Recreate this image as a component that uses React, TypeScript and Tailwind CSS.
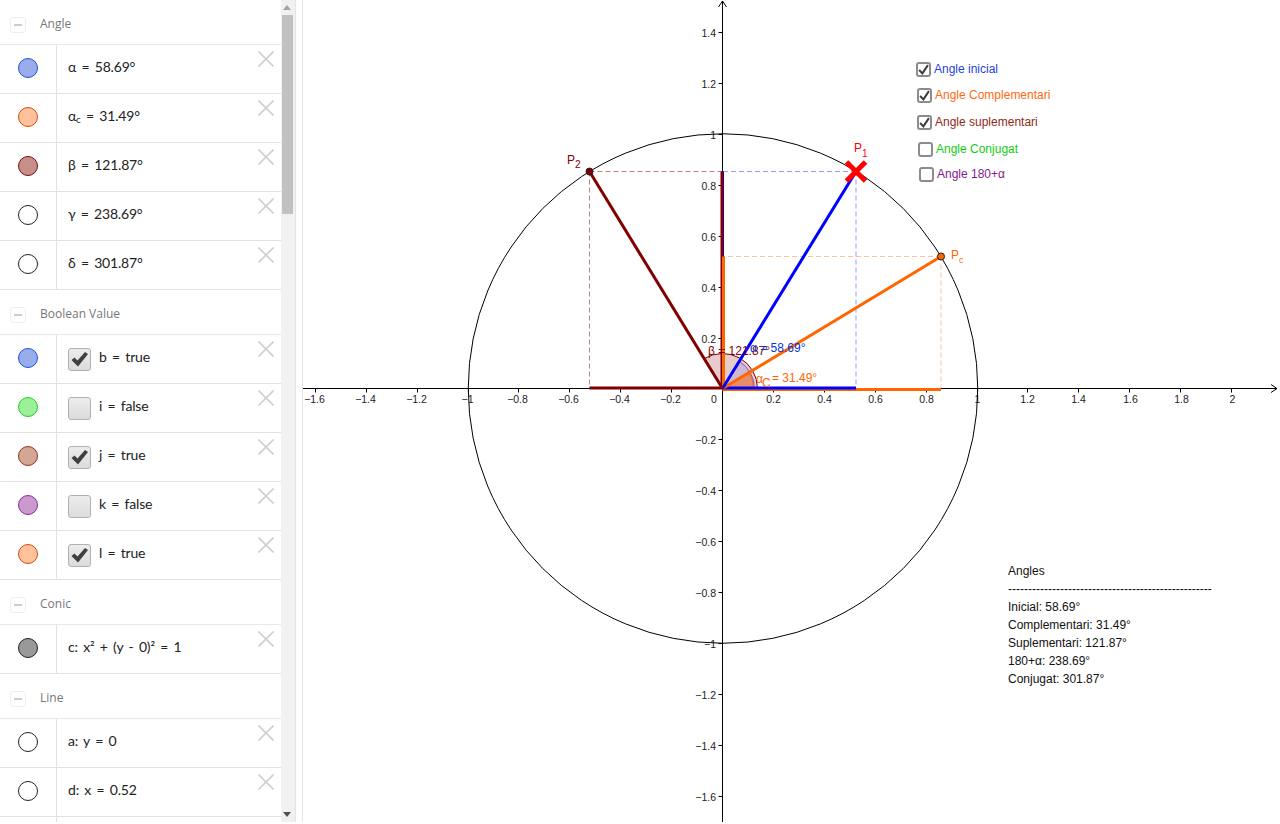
import React from "react";

const OX = 722.5;
const OY = 388.5;
const U = 254.5;

function Marble({ fill, border }: { fill: string; border: string }) {
  return (
    <span
      className="block w-5 h-5 rounded-full border mb-[3px]"
      style={{ backgroundColor: fill, borderColor: border }}
    />
  );
}

function CloseX() {
  return (
    <svg width="16" height="16" viewBox="0 0 16 16" className="absolute right-[7px] top-[6px]">
      <path d="M0.5 0.5 L15.5 15.5 M15.5 0.5 L0.5 15.5" stroke="#cfcfcf" strokeWidth="1.6" fill="none" />
    </svg>
  );
}

function Check({ on }: { on: boolean }) {
  return (
    <span className="relative flex items-center justify-center w-[23px] h-[23px] mr-2 rounded-[3px] border-[1.5px] border-[#b0b0b0] bg-gradient-to-b from-[#ececec] to-[#dcdcdc] shrink-0">
      {on && (
        <svg width="19" height="17" viewBox="0 0 19 17">
          <path d="M1.5 9 L4.5 6.5 L7.5 9.5 L15 1 L18 3 L8 15.5 Z" fill="#404040" />
        </svg>
      )}
    </span>
  );
}

type Row = { fill: string; border: string; text: React.ReactNode; check?: boolean };

function ItemRow({ fill, border, text, check }: Row) {
  return (
    <div className="relative flex h-[49px] border-b border-[#e1e1e1]">
      <div className="w-[57px] shrink-0 flex items-center justify-center border-r border-[#e1e1e1] pr-px">
        <Marble fill={fill} border={border} />
      </div>
      <div className="flex items-center pl-[11px] text-[14px] text-[#222] font-['Lato',sans-serif] tracking-[-0.2px] [word-spacing:2px]">
        {check !== undefined && <Check on={check} />}
        <span className="whitespace-pre mb-[6px]">{text}</span>
      </div>
      <CloseX />
    </div>
  );
}

function Group({ title, rows }: { title: string; rows: Row[] }) {
  return (
    <div>
      <div className="flex items-center h-[45px] pl-[10px] pt-px">
        <span className="flex items-center justify-center w-4 h-4 mt-1 rounded-[3px] border border-[#eeeeee]">
          <span className="block w-2 h-[2px] bg-[#cccccc]" />
        </span>
        <span className="ml-[14px] mt-[2px] text-[12px] text-[#777] font-['Open_Sans',sans-serif]">{title}</span>
      </div>
      <div className="border-t border-[#e8e8e8] -mt-px">
        {rows.map((r, i) => (
          <ItemRow key={i} {...r} />
        ))}
      </div>
    </div>
  );
}

const blue = { fill: "#99adec", border: "#1f4fe0" };
const orange = { fill: "#ffc29a", border: "#d9480f" };
const white = { fill: "#ffffff", border: "#222222" };

const groups: { title: string; rows: Row[] }[] = [
  {
    title: "Angle",
    rows: [
      { ...blue, text: "α = 58.69°" },
      { ...orange, text: <>α<sub className="text-[10px]">c</sub> = 31.49°</> },
      { fill: "#c68f8a", border: "#7a0c0c", text: "β = 121.87°" },
      { ...white, text: "γ = 238.69°" },
      { ...white, text: "δ = 301.87°" },
    ],
  },
  {
    title: "Boolean Value",
    rows: [
      { ...blue, text: "b = true", check: true },
      { fill: "#9df09a", border: "#1fd01f", text: "i = false", check: false },
      { fill: "#d2a796", border: "#96301c", text: "j = true", check: true },
      { fill: "#cc99cc", border: "#872e96", text: "k = false", check: false },
      { ...orange, text: "l = true", check: true },
    ],
  },
  { title: "Conic", rows: [{ fill: "#999999", border: "#222222", text: "c: x² + (y - 0)² = 1" }] },
  {
    title: "Line",
    rows: [
      { ...white, text: "a: y = 0" },
      { ...white, text: "d: x = 0.52" },
      { ...white, text: "" },
    ],
  },
];

const fmt = (v: number) => {
  const s = Math.abs(v).toFixed(1).replace(".0", "");
  return v < 0 ? "\u2212" + s : s;
};

const xTicks: number[] = [];
for (let i = -8; i <= 10; i++) if (i !== 0) xTicks.push(i / 5);
const yTicks: number[] = [];
for (let i = -8; i <= 7; i++) if (i !== 0) yTicks.push(i / 5);

function sector(r: number, deg: number) {
  const a = (deg * Math.PI) / 180;
  const x = OX + r * Math.cos(a);
  const y = OY - r * Math.sin(a);
  return `M${OX} ${OY} L${OX + r} ${OY} A${r} ${r} 0 0 0 ${x} ${y} Z`;
}

const P1 = { x: 856, y: 171.5 };
const P2 = { x: 589.5, y: 171.5 };
const Pc = { x: 941, y: 256.5 };

function Graph() {
  return (
    <svg
      className="absolute inset-0 w-full h-full font-['Liberation_Sans',sans-serif]"
      viewBox="303 0 977 822"
    >
      {/* dashed guides */}
      <g strokeDasharray="5 3" strokeWidth="1" fill="none">
        <path d={`M${P1.x} ${P1.y} H${OX} M${P1.x} ${P1.y} V${OY}`} stroke="#0000ff" strokeOpacity="0.4" />
        <path d={`M${P2.x} ${P2.y} H${OX} M${P2.x} ${P2.y} V${OY}`} stroke="#800000" strokeOpacity="0.5" />
        <path d={`M${Pc.x} ${Pc.y} H${OX} M${Pc.x} ${Pc.y} V${OY}`} stroke="#ff6600" strokeOpacity="0.4" />
      </g>

      {/* axes */}
      <path d={`M303 ${OY} H1277 M1271 ${OY - 4} L1277 ${OY} L1271 ${OY + 4}`} stroke="#000" fill="none" />
      <path d={`M${OX} 822 V1 M${OX - 4} 7 L${OX} 1 L${OX + 4} 7`} stroke="#000" fill="none" />
      {xTicks.map((t) => {
        const x = Math.round(OX + 0.5 + t * U) - 0.5;
        return (
          <g key={t}>
            <path d={`M${x} ${OY} v4`} stroke="#000" />
            <text x={x - (t < 0 ? 1 : 0) + (t > 1.5 ? 1 : 0)} y={403} textAnchor="middle" fontSize="10.5" fill="#222">
              {fmt(t)}
            </text>
          </g>
        );
      })}
      {yTicks.map((t) => {
        const y = Math.round(OY - t * U) + 0.5;
        return (
          <g key={t}>
            <path d={`M${OX - 4} ${y} h4`} stroke="#000" />
            <text x={716} y={y + 4.5} textAnchor="end" fontSize="10.5" fill="#222">
              {fmt(t)}
            </text>
          </g>
        );
      })}
      <text x={711} y={403} fontSize="10.5" fill="#222">0</text>

      {/* unit circle */}
      <circle cx={723} cy={OY} r={254.75} stroke="#000" strokeWidth="1" fill="none" />

      {/* angle sectors */}
      <path d={sector(35, 121.87)} fill="#800000" fillOpacity="0.2" stroke="#800000" strokeWidth="1" />
      <path d={sector(32, 58.69)} fill="#0000ff" fillOpacity="0.1" stroke="#0000ff" strokeOpacity="0.5" strokeWidth="1" />
      <path d={sector(31, 31.49)} fill="#ff6600" fillOpacity="0.5" stroke="#ff6600" strokeWidth="1" />

      {/* segments */}
      <g strokeWidth="3" fill="none">
        <path d={`M${OX} ${OY} L${OX} ${P1.y}`} stroke="#0000ff" />
        <path d={`M${OX - 0.5} ${OY} V${P2.y}`} stroke="#800000" />
        <path d={`M${OX + 1} ${OY} V${Pc.y}`} stroke="#ff6600" />
        <path d={`M${OX} ${OY + 1} H${Pc.x}`} stroke="#ff6600" />
        <path d={`M${OX} ${OY - 0.5} H${P1.x}`} stroke="#0000ff" />
        <path d={`M${P2.x} ${OY - 0.5} H${OX}`} stroke="#800000" />
        <path d={`M${OX} ${OY} L${Pc.x} ${Pc.y}`} stroke="#ff6600" />
        <path d={`M${OX} ${OY} L${P1.x} ${P1.y}`} stroke="#0000ff" />
        <path d={`M${OX} ${OY} L${P2.x} ${P2.y}`} stroke="#800000" />
      </g>

      {/* angle labels */}
      <text x={708} y={355} fontSize="12" fill="#800000">β = 121.87°</text>
      <text x={750} y={352} fontSize="12" fill="#0033dd">α = 58.69°</text>
      <text x={756} y={383} fontSize="12" fill="#ff6600">α</text>
      <text x={762} y={387} fontSize="12" fill="#ff6600">C</text>
      <text x={772} y={382} fontSize="12" fill="#ff6600">= 31.49°</text>

      {/* points */}
      <circle cx={P2.x} cy={P2.y} r="3.5" fill="#800000" stroke="#222" strokeWidth="1" />
      <circle cx={Pc.x} cy={Pc.y} r="3.5" fill="#ff6600" stroke="#222" strokeWidth="1" />
      <path
        d={`M${P1.x - 9.5} ${P1.y - 9.5} L${P1.x + 9.5} ${P1.y + 9.5} M${P1.x + 9.5} ${P1.y - 9.5} L${P1.x - 9.5} ${P1.y + 9.5}`}
        stroke="#ff0000"
        strokeWidth="5"
      />

      {/* point labels */}
      <text x={854} y={152} fontSize="12" fill="#ff0000">P</text>
      <text x={862} y={157} fontSize="10" fill="#ff0000">1</text>
      <text x={567} y={164} fontSize="12" fill="#800000">P</text>
      <text x={575} y={168} fontSize="10" fill="#800000">2</text>
      <text x={951} y={259} fontSize="12" fill="#ff6600">P</text>
      <text x={959} y={263} fontSize="9" fill="#ff6600">c</text>
    </svg>
  );
}

const toggles = [
  { label: "Angle inicial", on: true, color: "text-[#1f3fe0]", box: "left-[613px] top-[62px]", text: "left-[631px] top-[63px]" },
  { label: "Angle Complementari", on: true, color: "text-[#ff6a13]", box: "left-[614px] top-[88px]", text: "left-[632px] top-[89px]" },
  { label: "Angle suplementari", on: true, color: "text-[#8f2a1a]", box: "left-[614px] top-[115px]", text: "left-[632px] top-[116px]" },
  { label: "Angle Conjugat", on: false, color: "text-[#12cc12]", box: "left-[615px] top-[142px]", text: "left-[633px] top-[143px]" },
  { label: "Angle 180+α", on: false, color: "text-[#86198f]", box: "left-[616px] top-[167px]", text: "left-[634px] top-[168px]" },
];

const lines = [
  "Inicial: 58.69°",
  "Complementari: 31.49°",
  "Suplementari: 121.87°",
  "180+α: 238.69°",
  "Conjugat: 301.87°",
];

export default function App() {
  return (
    <div className="flex w-[1280px] h-[822px] overflow-hidden bg-white">
      <div className="w-[281px] h-full overflow-hidden shrink-0">
        {groups.map((g) => (
          <Group key={g.title} {...g} />
        ))}
      </div>
      <div className="relative w-[15px] h-full bg-[#f1f1f1] border-r border-[#e4e4e4] shrink-0 flex flex-col items-center">
        <svg width="8" height="5" viewBox="0 0 8 5" className="mt-[5px] mr-[2px]">
          <path d="M4 0 L8 5 H0 Z" fill="#a3a3a3" />
        </svg>
        <div className="w-[11px] h-[199px] mt-[5px] mr-[2px] bg-[#c1c1c1]" />
        <svg width="8" height="5" viewBox="0 0 8 5" className="mt-auto mb-[5px] mr-[2px]">
          <path d="M0 0 H8 L4 5 Z" fill="#505050" />
        </svg>
      </div>
      <div className="w-[7px] h-full bg-white border-r border-[#e4e4e4] shrink-0" />
      <div className="relative flex-1 h-full font-['Liberation_Sans',sans-serif]">
        <Graph />
        {toggles.map((t) => (
          <React.Fragment key={t.label}>
            <span className={`absolute ${t.box} flex items-center justify-center w-[15px] h-[15px] rounded-[3px] border-2 border-[#8c8c8c] bg-white`}>
              {t.on && (
                <svg width="11" height="11" viewBox="0 0 10 10">
                  <path d="M1 5.5 L4 8.5 L9 1" stroke="#3c3c3c" strokeWidth="1.8" fill="none" />
                </svg>
              )}
            </span>
            <span className={`absolute ${t.text} ${t.color} text-[12px] leading-[13px] whitespace-nowrap`}>{t.label}</span>
          </React.Fragment>
        ))}
        <div className="absolute left-[705px] top-[562px] text-[12px] leading-[18px] text-[#111] whitespace-nowrap">
          <div>Angles</div>
          <div>{"-".repeat(51)}</div>
          {lines.map((l) => (
            <div key={l}>{l}</div>
          ))}
        </div>
      </div>
    </div>
  );
}
